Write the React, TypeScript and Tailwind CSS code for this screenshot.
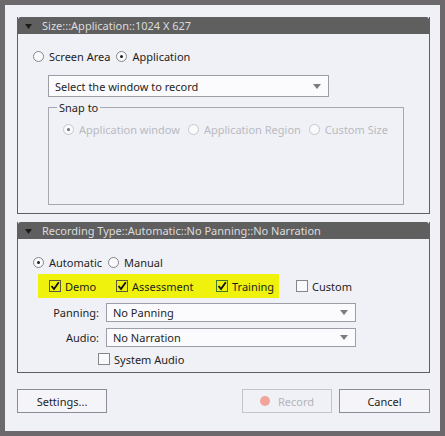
import React from 'react';

const Arrow = () => (
  <svg width="8" height="5" viewBox="0 0 8 5" className="shrink-0">
    <path d="M0 0 H8 L4 5 Z" fill="#7b7b80" />
  </svg>
);

const Radio = ({ checked, disabled, label }: { checked?: boolean; disabled?: boolean; label: string }) => (
  <div className={`flex items-center gap-[5px] whitespace-nowrap ${disabled ? 'text-[#b9bac2]' : 'text-[#1e1e1e]'}`}>
    <span
      className={`flex h-[11px] w-[11px] items-center justify-center rounded-full border bg-[#fafafc] ${
        disabled ? 'border-[#c6c7cd]' : 'border-[#85858c]'
      }`}
    >
      {checked && <span className={`h-[3px] w-[3px] rounded-full ${disabled ? 'bg-[#6a6a70]' : 'bg-[#1e1e1e]'}`} />}
    </span>
    <span>{label}</span>
  </div>
);

const Check = ({ checked, focus, label }: { checked?: boolean; focus?: boolean; label: string }) => (
  <div className="flex items-center gap-[4px] whitespace-nowrap text-[#1e1e1e]">
    <span
      className={`flex h-[12px] w-[12px] items-center justify-center border ${
        focus ? 'border-[#3f7a2a]' : checked ? 'border-[#5a5a3a]' : 'border-[#85858c] bg-[#fafafc]'
      }`}
    >
      {checked && (
        <svg width="10" height="10" viewBox="0 0 10 10">
          <path d="M1.5 5 L4 8 L8.8 1.3" fill="none" stroke="#111" strokeWidth="1.8" />
        </svg>
      )}
    </span>
    <span>{label}</span>
  </div>
);

const Select = ({ text, className }: { text: string; className: string }) => (
  <div className={`flex items-center justify-between border border-[#9d9da8] bg-[#fbfbfd] pl-[6px] pr-[7px] text-[#1e1e1e] ${className}`}>
    <span>{text}</span>
    <Arrow />
  </div>
);

const Header = ({ title }: { title: string }) => (
  <div className="flex h-[17px] items-center rounded-t-[3px] bg-[#5f5f60] pl-[7px] text-[#dcdcdc]">
    <svg width="7" height="5" viewBox="0 0 7 5" className="mt-[2px]">
      <path d="M0 0 H7 L3.5 5 Z" fill="#1c1c1c" />
    </svg>
    <span className="ml-[10px]">{title}</span>
  </div>
);

export default function App() {
  return (
    <div className="h-[436px] w-[445px] border-[5px] border-[#6c686c] bg-[#f0f1f6] pl-[12px] pr-[10px] pt-[12px] font-['Noto_Sans',sans-serif] text-[11px] leading-none">
      {/* size section */}
      <div className="h-[197px] border border-t-0 border-[#5f5f60]">
        <Header title="Size:::Application::1024 X 627" />
        <div className="pl-[15px] pt-[14px]">
          <div className="flex h-[16px] items-center gap-[6px]">
            <Radio label="Screen Area" />
            <Radio checked label="Application" />
          </div>
          <Select text="Select the window to record" className="ml-[15px] mt-[11px] h-[22px] w-[281px]" />
          <fieldset className="ml-[15px] mt-[5px] h-[103px] w-[356px] border border-[#a7a8b2] pl-[14px]">
            <legend className="ml-[-6px] px-[2px] text-[#1e1e1e]">Snap to</legend>
            <div className="mt-[9px] flex h-[14px] items-center gap-[8px]">
              <Radio checked disabled label="Application window" />
              <Radio disabled label="Application Region" />
              <Radio disabled label="Custom Size" />
            </div>
          </fieldset>
        </div>
      </div>

      {/* recording type section */}
      <div className="mt-[8px] h-[151px] border border-t-0 border-[#5f5f60]">
        <Header title="Recording Type::Automatic::No Panning::No Narration" />
        <div className="pl-[15px] pt-[16px]">
          <div className="flex h-[14px] items-center gap-[6px]">
            <Radio checked label="Automatic" />
            <Radio label="Manual" />
          </div>
          <div className="mt-[5px] flex items-center">
            <div className="ml-[5px] flex h-[24px] w-[241px] items-center bg-[#eef20c] pl-[11px]">
              <div className="w-[67px]"><Check checked label="Demo" /></div>
              <div className="w-[100px]"><Check checked label="Assessment" /></div>
              <Check checked focus label="Training" />
            </div>
            <div className="ml-[17px]"><Check label="Custom" /></div>
          </div>
          <div className="mt-[5px] flex items-center">
            <span className="w-[73px] pr-[7px] text-right text-[#1e1e1e]">Panning:</span>
            <Select text="No Panning" className="h-[19px] w-[250px]" />
          </div>
          <div className="mt-[6px] flex items-center">
            <span className="w-[73px] pr-[7px] text-right text-[#1e1e1e]">Audio:</span>
            <Select text="No Narration" className="h-[19px] w-[250px]" />
          </div>
          <div className="ml-[65px] mt-[6px]">
            <Check label="System Audio" />
          </div>
        </div>
      </div>

      {/* buttons */}
      <div className="mt-[16px] flex items-center">
        <button className="h-[24px] w-[90px] border border-[#8c8c98] bg-[#f5f5f9] text-[#1e1e1e]">Settings...</button>
        <button className="ml-auto flex h-[24px] w-[90px] items-center justify-center gap-[8px] border border-[#c4c5cc] bg-[#f0f1f6] text-[#b4b4ba]">
          <span className="h-[10px] w-[10px] rounded-full bg-[#f2a59c]" />
          Record
        </button>
        <button className="ml-[7px] h-[24px] w-[91px] border border-[#8c8c98] bg-[#f5f5f9] text-[#1e1e1e]">Cancel</button>
      </div>
    </div>
  );
}
